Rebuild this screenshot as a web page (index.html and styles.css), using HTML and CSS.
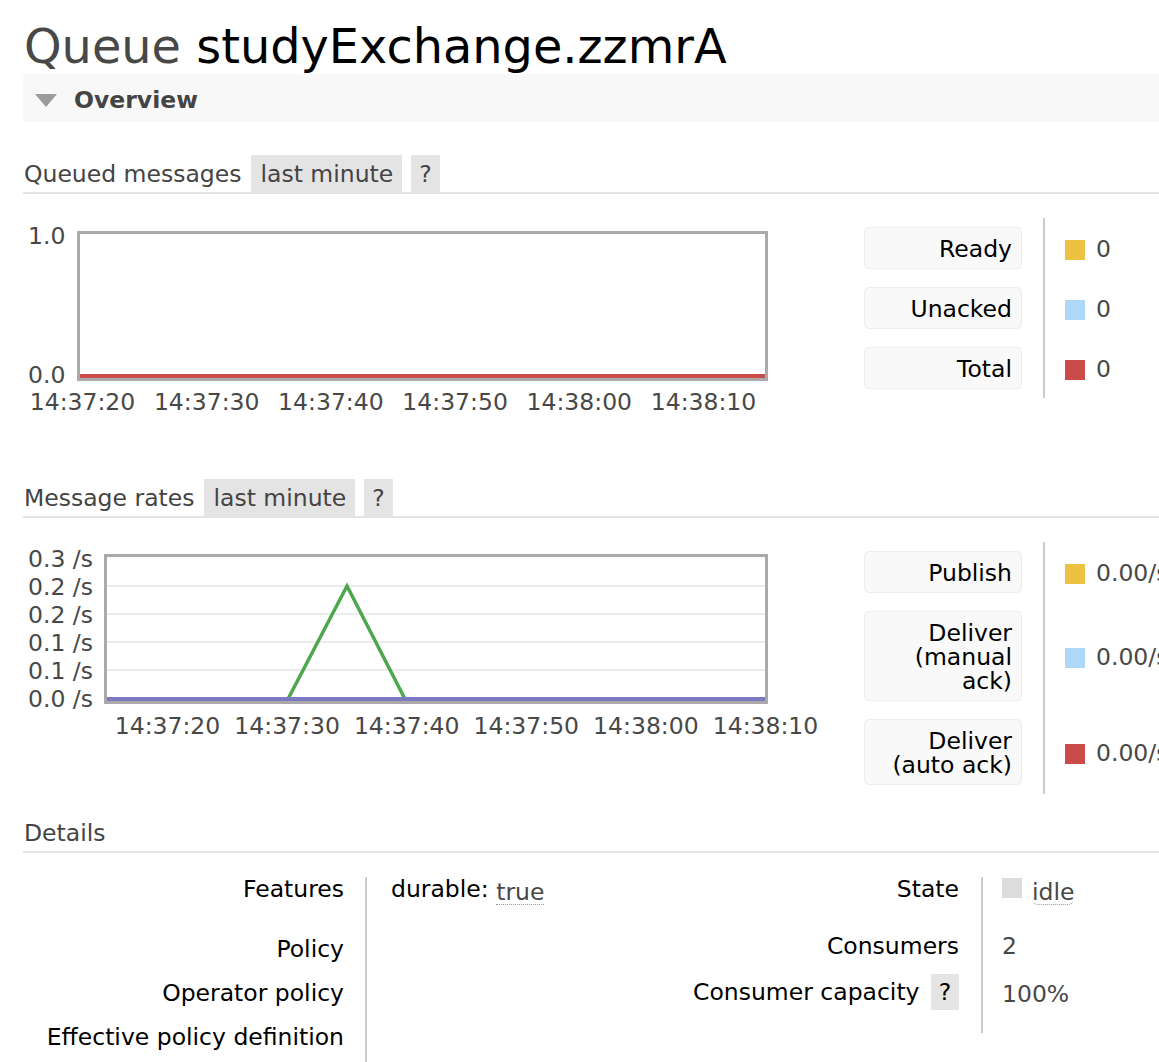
FILE: index.html
```html
<!DOCTYPE html>
<html lang="en">
<head>
<meta charset="utf-8">
<title>Queue studyExchange.zzmrA</title>
<link rel="stylesheet" href="styles.css">
</head>
<body>
<div class="main">
  <h1 class="title"><span class="title-kind">Queue</span> <span class="title-name">studyExchange.zzmrA</span></h1>

  <div class="section-bar">
    <svg class="toggle" width="22" height="13" viewBox="0 0 22 13"><polygon points="0,0 22,0 11,13" fill="#9c9c9c"/></svg>
    <span class="bar-title">Overview</span>
  </div>

  <div class="sub-head sh-queued">
    <span class="sub-title">Queued messages</span>
    <span class="pill">last minute</span>
    <span class="pill pill-q">?</span>
  </div>

  <div class="chart-row">
    <div class="chart chart-q">
      <div class="yaxis">
        <span class="ytick" style="top:-9px">1.0</span>
        <span class="ytick" style="top:130px">0.0</span>
      </div>
      <div class="frame">
        <svg width="685" height="144" viewBox="0 0 685 144">
          <line x1="0" y1="142" x2="685" y2="142" stroke="#cb4b4b" stroke-width="4"/>
        </svg>
      </div>
      <div class="xaxis">
        <span class="xtick" style="left:59.5px">14:37:20</span>
        <span class="xtick" style="left:183.7px">14:37:30</span>
        <span class="xtick" style="left:307.9px">14:37:40</span>
        <span class="xtick" style="left:432.1px">14:37:50</span>
        <span class="xtick" style="left:556.3px">14:38:00</span>
        <span class="xtick" style="left:680.5px">14:38:10</span>
      </div>
    </div>

    <div class="legend">
      <div class="lg-label"><div class="lg-box">Ready</div></div>
      <div class="lg-value"><span class="swatch sw-yellow"></span>0</div>
      <div class="lg-label"><div class="lg-box">Unacked</div></div>
      <div class="lg-value"><span class="swatch sw-blue"></span>0</div>
      <div class="lg-label"><div class="lg-box">Total</div></div>
      <div class="lg-value"><span class="swatch sw-red"></span>0</div>
    </div>
  </div>

  <div class="sub-head sh-rates">
    <span class="sub-title">Message rates</span>
    <span class="pill">last minute</span>
    <span class="pill pill-q">?</span>
  </div>

  <div class="chart-row">
    <div class="chart chart-r">
      <div class="yaxis">
        <span class="ytick" style="top:-9px">0.3 /s</span>
        <span class="ytick" style="top:19px">0.2 /s</span>
        <span class="ytick" style="top:47px">0.2 /s</span>
        <span class="ytick" style="top:75px">0.1 /s</span>
        <span class="ytick" style="top:103px">0.1 /s</span>
        <span class="ytick" style="top:131px">0.0 /s</span>
      </div>
      <div class="frame">
        <svg width="658" height="144" viewBox="0 0 658 144">
          <line x1="0" y1="29" x2="658" y2="29" stroke="#ececec" stroke-width="2"/>
          <line x1="0" y1="57" x2="658" y2="57" stroke="#ececec" stroke-width="2"/>
          <line x1="0" y1="85" x2="658" y2="85" stroke="#ececec" stroke-width="2"/>
          <line x1="0" y1="113" x2="658" y2="113" stroke="#ececec" stroke-width="2"/>
          <polyline points="0,142 181,142 240,29 298,142 658,142" fill="none" stroke="#4da74d" stroke-width="3.5" stroke-linejoin="miter"/>
          <line x1="0" y1="142" x2="658" y2="142" stroke="#7c79c3" stroke-width="4"/>
        </svg>
      </div>
      <div class="xaxis">
        <span class="xtick" style="left:144.5px">14:37:20</span>
        <span class="xtick" style="left:264.1px">14:37:30</span>
        <span class="xtick" style="left:383.7px">14:37:40</span>
        <span class="xtick" style="left:503.3px">14:37:50</span>
        <span class="xtick" style="left:622.9px">14:38:00</span>
        <span class="xtick" style="left:742.5px">14:38:10</span>
      </div>
    </div>

    <div class="legend">
      <div class="lg-label"><div class="lg-box">Publish</div></div>
      <div class="lg-value"><span class="swatch sw-yellow"></span>0.00/s</div>
      <div class="lg-label"><div class="lg-box">Deliver (manual ack)</div></div>
      <div class="lg-value"><span class="swatch sw-blue"></span>0.00/s</div>
      <div class="lg-label"><div class="lg-box">Deliver (auto ack)</div></div>
      <div class="lg-value"><span class="swatch sw-red"></span>0.00/s</div>
    </div>
  </div>

  <div class="sub-head sh-details">
    <span class="sub-title">Details</span>
  </div>

  <div class="details">
    <div class="facts facts-l">
      <div class="k pb-features">Features</div>
      <div class="v pb-features"><span class="feat">durable:</span> <span class="abbr">true</span></div>
      <div class="k pb-row">Policy</div>
      <div class="v pb-row"></div>
      <div class="k pb-row">Operator policy</div>
      <div class="v pb-row"></div>
      <div class="k pb-row">Effective policy definition</div>
      <div class="v pb-row"></div>
    </div>
    <div class="facts facts-r">
      <div class="k pb-state">State</div>
      <div class="v pb-state"><span class="state-box"></span><span class="abbr abbr-idle">idle</span></div>
      <div class="k pb-consumers">Consumers</div>
      <div class="v pb-consumers">2</div>
      <div class="k k-cap pb-cap">Consumer capacity <span class="pill-help">?</span></div>
      <div class="v v-cap pb-cap">100%</div>
    </div>
  </div>
</div>
</body>
</html>
```

FILE: styles.css
```css
html {
  overflow: hidden;
}

body {
  margin: 0;
  font-family: "DejaVu Sans", Verdana, sans-serif;
  font-size: 23.5px;
  color: #484848;
  background: #fff;
}

.main {
  margin-left: 23px;
}

.title {
  margin: 20px 0 0 1px;
  font-size: 47.8px;
  line-height: 54px;
  font-weight: normal;
  color: #484848;
  white-space: nowrap;
}

.title-name {
  color: #000;
}

.section-bar {
  height: 48px;
  background: #f8f8f8;
  display: flex;
  align-items: center;
}

.toggle {
  display: block;
  margin-left: 12px;
  margin-top: 4px;
}

.bar-title {
  margin-left: 17px;
  padding-top: 3px;
  font-weight: bold;
  color: #444;
}

.sub-head {
  display: flex;
  height: 37px;
  border-bottom: 2px solid #e4e4e4;
  white-space: nowrap;
}

.sub-head span {
  padding-top: 2px;
  line-height: 35px;
}

.sh-queued {
  margin-top: 33px;
}

.sh-rates {
  margin-top: 63px;
}

.sh-details {
  margin-top: 20px;
}

.sub-title {
  margin-left: 1px;
  margin-right: 10px;
  color: #444;
}

.pill {
  background: #e4e4e4;
  padding-left: 9px;
  padding-right: 9px;
  margin-right: 9px;
  color: #444;
}

.pill-q {
  padding-left: 8px;
  padding-right: 8px;
}

.chart-row {
  display: flex;
  align-items: flex-start;
  margin-top: 24px;
  white-space: nowrap;
}

.chart {
  display: grid;
  width: 745px;
  flex: none;
}

.chart-q {
  grid-template-columns: 54px 691px;
  margin-top: 13px;
}

.chart-r {
  grid-template-columns: 81px 664px;
  margin-top: 12px;
}

.yaxis {
  position: relative;
}

.ytick {
  position: absolute;
  left: 5px;
  line-height: 28px;
  color: #484848;
}

.frame {
  border: 3px solid #aaa;
  height: 144px;
  background: #fff;
}

.frame svg {
  display: block;
}

.xaxis {
  grid-column: 1 / 3;
  position: relative;
  height: 28px;
  margin-top: 7px;
}

.chart-r .xaxis {
  margin-top: 8px;
}

.xtick {
  position: absolute;
  top: 0;
  line-height: 28px;
  transform: translateX(-50%);
  color: #484848;
}

.legend {
  margin-left: 96px;
  display: grid;
  grid-template-columns: auto auto;
  flex: none;
}

.lg-label {
  padding: 9px 21px 9px 0;
}

.lg-box {
  width: 158px;
  box-sizing: border-box;
  background: #f9f9f9;
  border: 1px solid #ececec;
  border-radius: 5px;
  padding: 9px 9px 7px 12px;
  text-align: right;
  line-height: 24px;
  color: #000;
  white-space: normal;
}

.lg-value {
  border-left: 2px solid #ccc;
  padding-left: 20px;
  padding-top: 2px;
  display: flex;
  align-items: center;
  color: #484848;
}

.swatch {
  width: 20px;
  height: 20px;
  margin-right: 11px;
  margin-top: 1px;
  flex: none;
}

.sw-yellow { background: #edc240; }
.sw-blue { background: #afd8f8; }
.sw-red { background: #cb4b4b; }

.details {
  display: flex;
  margin-top: 24px;
  white-space: nowrap;
}

.facts {
  display: grid;
  line-height: 24px;
  align-content: start;
}

.facts-l {
  grid-template-columns: 342px 270px;
}

.facts-r {
  grid-template-columns: 346px auto;
}

.facts .k {
  text-align: right;
  padding-right: 21px;
  color: #000;
}

.facts-r .k {
  padding-right: 22px;
}

.facts .v {
  border-left: 2px solid #ccc;
  padding-left: 24px;
  color: #484848;
}

.facts-r .v {
  padding-left: 19px;
}

.pb-features { padding-bottom: 32px; }
.pb-row { padding-bottom: 20px; }
.pb-state { padding-bottom: 29px; }
.pb-consumers { padding-bottom: 16px; }
.pb-cap { padding-bottom: 19px; line-height: 36px; }

.feat {
  color: #000;
}

.abbr {
  display: inline-block;
  line-height: 24px;
  vertical-align: -3px;
  border-bottom: 1px dotted #999;
  color: #484848;
}

.abbr-idle {
  border-radius: 0 0 6px 6px;
}

.state-box {
  display: inline-block;
  width: 20px;
  height: 20px;
  background: #ddd;
  margin-right: 10px;
  vertical-align: -1px;
}

.pill-help {
  display: inline-block;
  width: 28px;
  height: 36px;
  line-height: 36px;
  margin-left: 4px;
  text-align: center;
  background: #e4e4e4;
  color: #000;
}

.v-cap {
  line-height: 40px;
}
```
